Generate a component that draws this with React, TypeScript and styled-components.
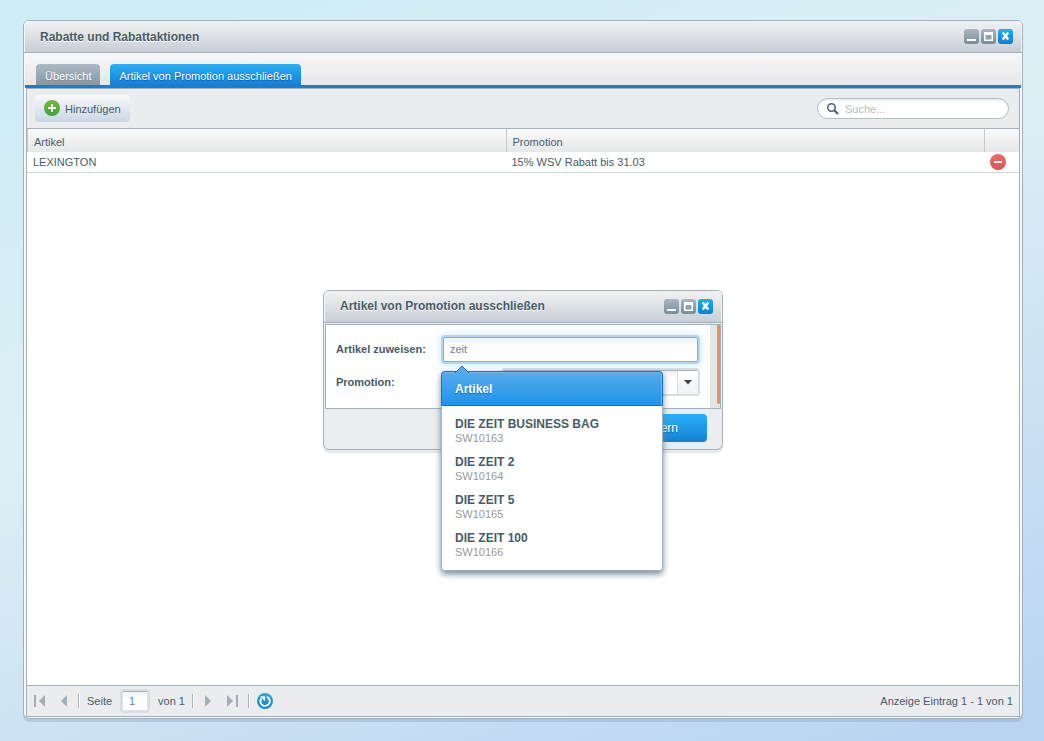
import React from 'react';
import styled, { createGlobalStyle, css } from 'styled-components';

const line = '#9fb1be';
const ink = '#475c6a';

const GlobalStyle = createGlobalStyle`
  * { box-sizing: border-box; }
  body {
    margin: 0;
    font: 11px/14px "Liberation Sans", Arial, sans-serif;
    color: ${ink};
  }
  button, input, select { font: inherit; color: inherit; margin: 0; }
`;

const Desktop = styled.div`
  min-height: 100vh;
  display: flex;
  padding: 20px 21px 22px 23px;
  background: linear-gradient(160deg, #cdecf5 0%, #dceff5 42%, #b8d2f1 100%);
`;

const frame = css`
  display: flex;
  flex-direction: column;
  border: 1px solid ${line};
  border-radius: 6px;
`;

const MainWindow = styled.main`
  ${frame}
  flex: 1;
  min-width: 0;
  position: relative;
  background: #f6f8fa;
  box-shadow: 0 3px 0 rgba(125, 150, 175, 0.3);
`;

const Dialog = styled.section`
  ${frame}
  position: absolute;
  top: 50%;
  left: 50%;
  width: 400px;
  transform: translate(-50%, -50%);
  background: #ebedef;
  box-shadow: 0 3px 0 #e9eaeb;
`;

const TitleBar = styled.header`
  display: flex;
  align-items: center;
  justify-content: space-between;
  height: 32px;
  padding: 0 9px 0 16px;
  border-bottom: 1px solid ${line};
  border-radius: 5px 5px 0 0;
  background: linear-gradient(#f0f1f1, #e4e6e8 35%, #c6ced5);
  box-shadow: inset 1px 0 #f3f5f6, inset -1px 0 #f3f5f6;
`;

const Title = styled.h1`
  margin: 0;
  font-size: 12px;
  line-height: 16px;
  text-shadow: 0 1px #fff;
`;

const Controls = styled.div`
  display: flex;
  gap: 2px;
`;

const ControlButton = styled.button<{ $close?: boolean }>`
  width: 15px;
  height: 15px;
  padding: 0;
  border: 0;
  border-radius: 3px;
  background: ${p => (p.$close ? 'linear-gradient(#1fb0fb, #0a7fd6)' : 'linear-gradient(#a9b7c2, #768d9d)')};
  svg { display: block; }
`;

const TabBar = styled.nav`
  display: flex;
  align-items: flex-end;
  gap: 10px;
  height: 35px;
  margin: 0 1px;
  padding: 0 11px;
  border-bottom: 3px solid #1580d2;
  background: linear-gradient(#f8f8f8, #e5e6e8);
`;

const Tab = styled.button<{ $active?: boolean }>`
  height: 21px;
  padding: 3px 9px 0;
  border: 0;
  border-radius: 4px 4px 0 0;
  color: #fff;
  white-space: nowrap;
  background: ${p => (p.$active ? 'linear-gradient(#2bb0f8, #1580d2)' : 'linear-gradient(#abbac5, #8298a6)')};
  text-shadow: 0 1px 1px ${p => (p.$active ? '#1155c8' : '#7a8e9c')};
`;

const Panel = styled.div`
  flex: 1;
  display: flex;
  flex-direction: column;
  margin: 0 2px 1px;
  border: 1px solid ${line};
  background: #fff;
`;

const Toolbar = styled.div`
  display: flex;
  align-items: center;
  justify-content: space-between;
  height: 40px;
  padding: 0 10px 0 8px;
  border-bottom: 1px solid ${line};
  background: #ebecee;
`;

const AddButton = styled.button`
  display: flex;
  align-items: flex-start;
  gap: 5px;
  height: 27px;
  padding: 5px 9px 4px;
  border: 0;
  border-radius: 4px;
  line-height: 18px;
  background: linear-gradient(#f8f9fb, #cbd6e4);
`;

const SearchBox = styled.label`
  display: flex;
  align-items: center;
  gap: 6px;
  width: 192px;
  height: 21px;
  padding: 0 9px;
  border: 1px solid #aebdc9;
  border-radius: 11px;
  background: #fff;
  box-shadow: inset 0 2px 2px #eceef0;
`;

const SearchInput = styled.input`
  flex: 1;
  min-width: 0;
  padding: 0;
  border: 0;
  outline: 0;
  background: none;
  &::placeholder { color: #b5bcc2; opacity: 1; }
`;

const Grid = styled.table`
  width: 100%;
  table-layout: fixed;
  border-spacing: 0;
  border-collapse: separate;
`;

const HeadCell = styled.th<{ $narrow?: boolean }>`
  width: ${p => (p.$narrow ? '35px' : 'auto')};
  height: 23px;
  padding: 3px 0 0 6px;
  border-left: 1px solid #c3cad0;
  font-weight: normal;
  text-align: left;
  background: linear-gradient(#fafafa, #e6e7e8);
`;

const Cell = styled.td`
  height: 21px;
  padding: 0 0 0 6px;
  border-bottom: 1px solid #cbd5dc;
`;

const IconButton = styled.button`
  display: block;
  padding: 0;
  border: 0;
  background: none;
  svg { display: block; }
`;

const Pager = styled.footer`
  display: flex;
  align-items: center;
  height: 31px;
  margin-top: auto;
  padding: 0 6px 0 4px;
  border-top: 1px solid ${line};
  background: #ebecee;
`;

const PagerGroup = styled.div`
  display: flex;
  align-items: center;
  gap: 7px;
`;

const StepGroup = styled(PagerGroup)`
  gap: 14px;
  padding: 0 3px;
`;

const Separator = styled.span`
  width: 2px;
  height: 14px;
  border-left: 1px solid #aab7c1;
  border-right: 1px solid #fff;
`;

const PageLabel = styled.label`
  display: flex;
  align-items: center;
  gap: 10px;
`;

const PageInput = styled.input`
  width: 26px;
  height: 20px;
  padding: 0 6px;
  border: 1px solid #b4c0c8;
  border-color: #a5b2bc #dfe4e8 #dfe4e8;
  border-radius: 2px;
  outline: 0;
  color: #5a86b5;
  background: linear-gradient(#f0f1f1, #fff 40%);
  box-shadow: 0 0 0 2px #d6dce1;
`;

const Status = styled.span`
  margin-left: auto;
`;

const FormPanel = styled.div`
  display: flex;
  height: 85px;
  margin: 1px 1px 0;
  border: 1px solid ${line};
  background: #fff;
`;

const Fields = styled.div`
  flex: 1;
  display: flex;
  flex-direction: column;
  gap: 8px;
  padding: 12px 12px 0 10px;
`;

const Field = styled.div`
  display: flex;
  align-items: center;
  position: relative;
`;

const FieldLabel = styled.label`
  width: 107px;
  font-weight: bold;
`;

const TextInput = styled.input`
  flex: 1;
  min-width: 0;
  height: 25px;
  padding: 0 6px;
  border: 1px solid #74b4ec;
  border-radius: 2px;
  outline: 0;
  color: #71818d;
  background: linear-gradient(#eef1f0, #fff 40%);
  box-shadow: 0 0 0 2px #b9d3ea, 0 0 8px 3px #d5eafc;
`;

const Combo = styled.div`
  display: flex;
  width: 195px;
  height: 24px;
  margin-left: auto;
  border-top: 1px solid #a5b2bc;
  border-radius: 2px;
  background: linear-gradient(#f0f1f1, #fff 40%);
  box-shadow: 0 0 0 2px #d6dce1;
`;

const ComboSelect = styled.select`
  flex: 1;
  padding: 0 6px;
  border: 0;
  outline: 0;
  appearance: none;
  background: none;
`;

const ComboTrigger = styled.span`
  display: grid;
  place-items: center;
  width: 21px;
  border-left: 1px solid #d6dce1;
  background: linear-gradient(#fff, #eff0f2);
`;

const ScrollTrack = styled.div`
  width: 10px;
  padding-left: 7px;
  background: #e5e5e5;
  &::after {
    content: '';
    display: block;
    height: 79px;
    background: #ee8c6c;
    border-radius: 0 0 2px 2px;
  }
`;

const DialogFooter = styled.footer`
  display: flex;
  justify-content: flex-end;
  height: 40px;
  padding: 5px 15px 0;
`;

const PrimaryButton = styled.button`
  height: 28px;
  padding: 0 29px;
  border: 0;
  border-radius: 4px;
  font-size: 12px;
  color: #fff;
  text-shadow: 0 1px 1px #1468b0;
  background: linear-gradient(#2bb0f8, #1580d2);
`;

const Suggestions = styled.div`
  position: absolute;
  top: 34px;
  left: 105px;
  width: 222px;
  z-index: 2;
  border-radius: 4px;
  background: #fff;
  box-shadow: inset 0 0 0 1px ${line}, 0 3px 6px #6d8798;
`;

const SuggestionHead = styled.div`
  height: 35px;
  padding: 9px 13px 0;
  border: 1px solid #1673cc;
  border-radius: 4px 4px 0 0;
  font-size: 12px;
  line-height: 16px;
  font-weight: bold;
  color: #fff;
  text-shadow: 0 1px 1px #1a62a8;
  background: linear-gradient(#57abec, #1f94e9);
  box-shadow: inset 0 1px #6cbaf3, inset -1px 0 #6cbaf3;
`;

const Pointer = styled.svg`
  position: absolute;
  top: -6px;
  left: 13px;
`;

const SuggestionList = styled.ul`
  display: grid;
  gap: 10px;
  margin: 0;
  padding: 10px 14px 13px;
  list-style: none;
`;

const Suggestion = styled.li`
  line-height: 12px;
  color: #999;
  strong {
    display: block;
    font-size: 12px;
    line-height: 16px;
    color: ${ink};
  }
`;

function WindowTitle({ children }: { children: string }) {
  return (
    <TitleBar>
      <Title>{children}</Title>
      <Controls>
        <ControlButton aria-label="Minimieren">
          <svg width="15" height="15"><path d="M3 10h9v2H3z" fill="#fff" /></svg>
        </ControlButton>
        <ControlButton aria-label="Maximieren">
          <svg width="15" height="15">
            <path fillRule="evenodd" d="M3 3h9v9H3zM4.600 6v4.600h5.800V6z" fill="#fff" />
          </svg>
        </ControlButton>
        <ControlButton $close aria-label="Schließen">
          <svg width="15" height="15"><path d="M4.700 3.500l5.600 7M10.300 3.500l-5.600 7" stroke="#fff" strokeWidth="2.400" /></svg>
        </ControlButton>
      </Controls>
    </TitleBar>
  );
}

function Badge({ id, from, to, children }: { id: string; from: string; to: string; children: React.ReactNode }) {
  return (
    <svg width="16" height="16" aria-hidden="true">
      <defs>
        <linearGradient id={id} x2="0" y2="1">
          <stop stopColor={from} />
          <stop offset="1" stopColor={to} />
        </linearGradient>
      </defs>
      <circle cx="8" cy="8" r="8" fill={`url(#${id})`} />
      {children}
    </svg>
  );
}

function StepIcon({ dir, edge }: { dir: 'prev' | 'next'; edge?: boolean }) {
  const w = edge ? 12 : 8;
  return (
    <svg width={w} height="12" viewBox={`0 0 ${w} 12`} fill="#a3b0bb">
      <g transform={dir === 'next' ? `translate(${w} 0) scale(-1 1)` : undefined}>
        {edge && <path d="M0 0h2v12H0z" />}
        <path d={edge ? 'M11 0v12L5 6z' : 'M7 0v12L1 6z'} />
      </g>
    </svg>
  );
}

const articles = [
  ['DIE ZEIT BUSINESS BAG', 'SW10163'],
  ['DIE ZEIT 2', 'SW10164'],
  ['DIE ZEIT 5', 'SW10165'],
  ['DIE ZEIT 100', 'SW10166'],
];

export default function App() {
  return (
    <Desktop>
      <GlobalStyle />
      <MainWindow>
        <WindowTitle>Rabatte und Rabattaktionen</WindowTitle>
        <TabBar>
          <Tab>Übersicht</Tab>
          <Tab $active>Artikel von Promotion ausschließen</Tab>
        </TabBar>
        <Panel>
          <Toolbar>
            <AddButton>
              <Badge id="add" from="#74b93c" to="#3da535">
                <path d="M8 4v8M4 8h8" stroke="#fff" strokeWidth="2" />
              </Badge>
              Hinzufügen
            </AddButton>
            <SearchBox>
              <svg width="12" height="12" fill="none" stroke="#4f6371" aria-hidden="true">
                <circle cx="4.500" cy="4.500" r="3.700" strokeWidth="1.600" />
                <path d="M7 7l4 4" strokeWidth="2.300" />
              </svg>
              <SearchInput aria-label="Suche" placeholder="Suche..." />
            </SearchBox>
          </Toolbar>
          <Grid>
            <thead>
              <tr>
                <HeadCell>Artikel</HeadCell>
                <HeadCell>Promotion</HeadCell>
                <HeadCell $narrow />
              </tr>
            </thead>
            <tbody>
              <tr>
                <Cell>LEXINGTON</Cell>
                <Cell>15% WSV Rabatt bis 31.03</Cell>
                <Cell>
                  <IconButton aria-label="Löschen">
                    <Badge id="remove" from="#ea6e69" to="#dc5350">
                      <path d="M4 7h8v2H4z" fill="#fff" />
                    </Badge>
                  </IconButton>
                </Cell>
              </tr>
            </tbody>
          </Grid>
          <Pager>
            <PagerGroup>
              <StepGroup>
                <IconButton aria-label="Erste Seite"><StepIcon dir="prev" edge /></IconButton>
                <IconButton aria-label="Vorherige Seite"><StepIcon dir="prev" /></IconButton>
              </StepGroup>
              <Separator />
              <PageLabel>
                Seite
                <PageInput defaultValue="1" />
                von 1
              </PageLabel>
              <Separator />
              <StepGroup>
                <IconButton aria-label="Nächste Seite"><StepIcon dir="next" /></IconButton>
                <IconButton aria-label="Letzte Seite"><StepIcon dir="next" edge /></IconButton>
              </StepGroup>
              <Separator />
              <IconButton aria-label="Aktualisieren">
                <Badge id="reload" from="#2fa5dd" to="#1489cb">
                  <path d="M10 3.900A4.700 4.700 0 1 1 4.300 5.400" fill="none" stroke="#fff" strokeWidth="1.800" />
                  <path d="M3 3.200h5v5z" fill="#fff" />
                </Badge>
              </IconButton>
            </PagerGroup>
            <Status>Anzeige Eintrag 1 - 1 von 1</Status>
          </Pager>
        </Panel>

        <Dialog role="dialog" aria-label="Artikel von Promotion ausschließen">
          <WindowTitle>Artikel von Promotion ausschließen</WindowTitle>
          <FormPanel>
            <Fields>
              <Field>
                <FieldLabel htmlFor="article">Artikel zuweisen:</FieldLabel>
                <TextInput id="article" defaultValue="zeit" />
                <Suggestions>
                  <Pointer width="16" height="8">
                    <path d="M1 8L8 1l7 7" fill="#57abec" stroke="#1673cc" />
                  </Pointer>
                  <SuggestionHead>Artikel</SuggestionHead>
                  <SuggestionList>
                    {articles.map(([name, number]) => (
                      <Suggestion key={number}>
                        <strong>{name}</strong>
                        {number}
                      </Suggestion>
                    ))}
                  </SuggestionList>
                </Suggestions>
              </Field>
              <Field>
                <FieldLabel htmlFor="promotion">Promotion:</FieldLabel>
                <Combo>
                  <ComboSelect id="promotion" defaultValue="">
                    <option value="" />
                  </ComboSelect>
                  <ComboTrigger>
                    <svg width="8" height="5"><path d="M0 0h8L4 4.500z" fill="#3b4c59" /></svg>
                  </ComboTrigger>
                </Combo>
              </Field>
            </Fields>
            <ScrollTrack />
          </FormPanel>
          <DialogFooter>
            <PrimaryButton>Speichern</PrimaryButton>
          </DialogFooter>
        </Dialog>
      </MainWindow>
    </Desktop>
  );
}
